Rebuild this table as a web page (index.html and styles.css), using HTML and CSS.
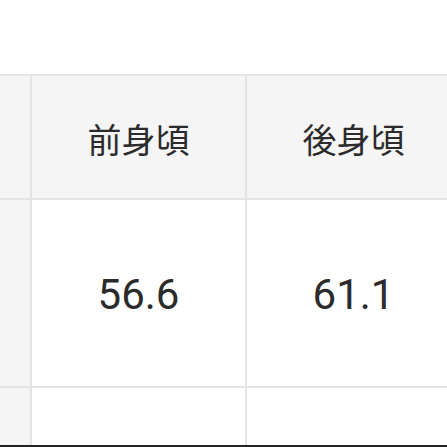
FILE: index.html
```html
<!DOCTYPE html>
<html lang="ja">
<head>
<meta charset="utf-8">
<link rel="stylesheet" href="styles.css">
</head>
<body>
<div class="page">
  <div class="top"></div>
  <div class="table">
    <div class="cell side"></div>
    <div class="cell head">前身頃</div>
    <div class="cell head">後身頃</div>
    <div class="cell side"></div>
    <div class="cell num">56.6</div>
    <div class="cell num">61.1</div>
    <div class="cell side"></div>
    <div class="cell"></div>
    <div class="cell"></div>
  </div>
  <div class="edge"></div>
</div>
</body>
</html>
```
FILE: styles.css
```css
html, body {
  margin: 0;
  padding: 0;
  background: #ffffff;
}
.page {
  width: 447px;
  height: 447px;
  overflow: hidden;
  display: flex;
  flex-direction: column;
}
.top {
  height: 74px;
  flex: none;
}
.table {
  flex: none;
  display: grid;
  grid-template-columns: 30px 213px 213px;
  grid-template-rows: 122px 186px 57px;
  gap: 2px;
  padding-top: 2px;
  background: #e3e4e6;
  width: 460px;
}
.cell {
  background: #ffffff;
  display: flex;
  align-items: center;
  justify-content: center;
  color: #2b2b2b;
}
.side {
  background: #f5f5f6;
}
.head {
  background: #f5f5f6;
  font-family: "Noto Sans CJK JP", "Noto Sans", sans-serif;
  font-size: 34px;
  padding-top: 2px;
}
.num {
  font-family: Roboto, "Noto Sans", sans-serif;
  font-size: 42px;
  padding-top: 2px;
}
.edge {
  height: 2px;
  background: #222222;
  flex: none;
}
```
